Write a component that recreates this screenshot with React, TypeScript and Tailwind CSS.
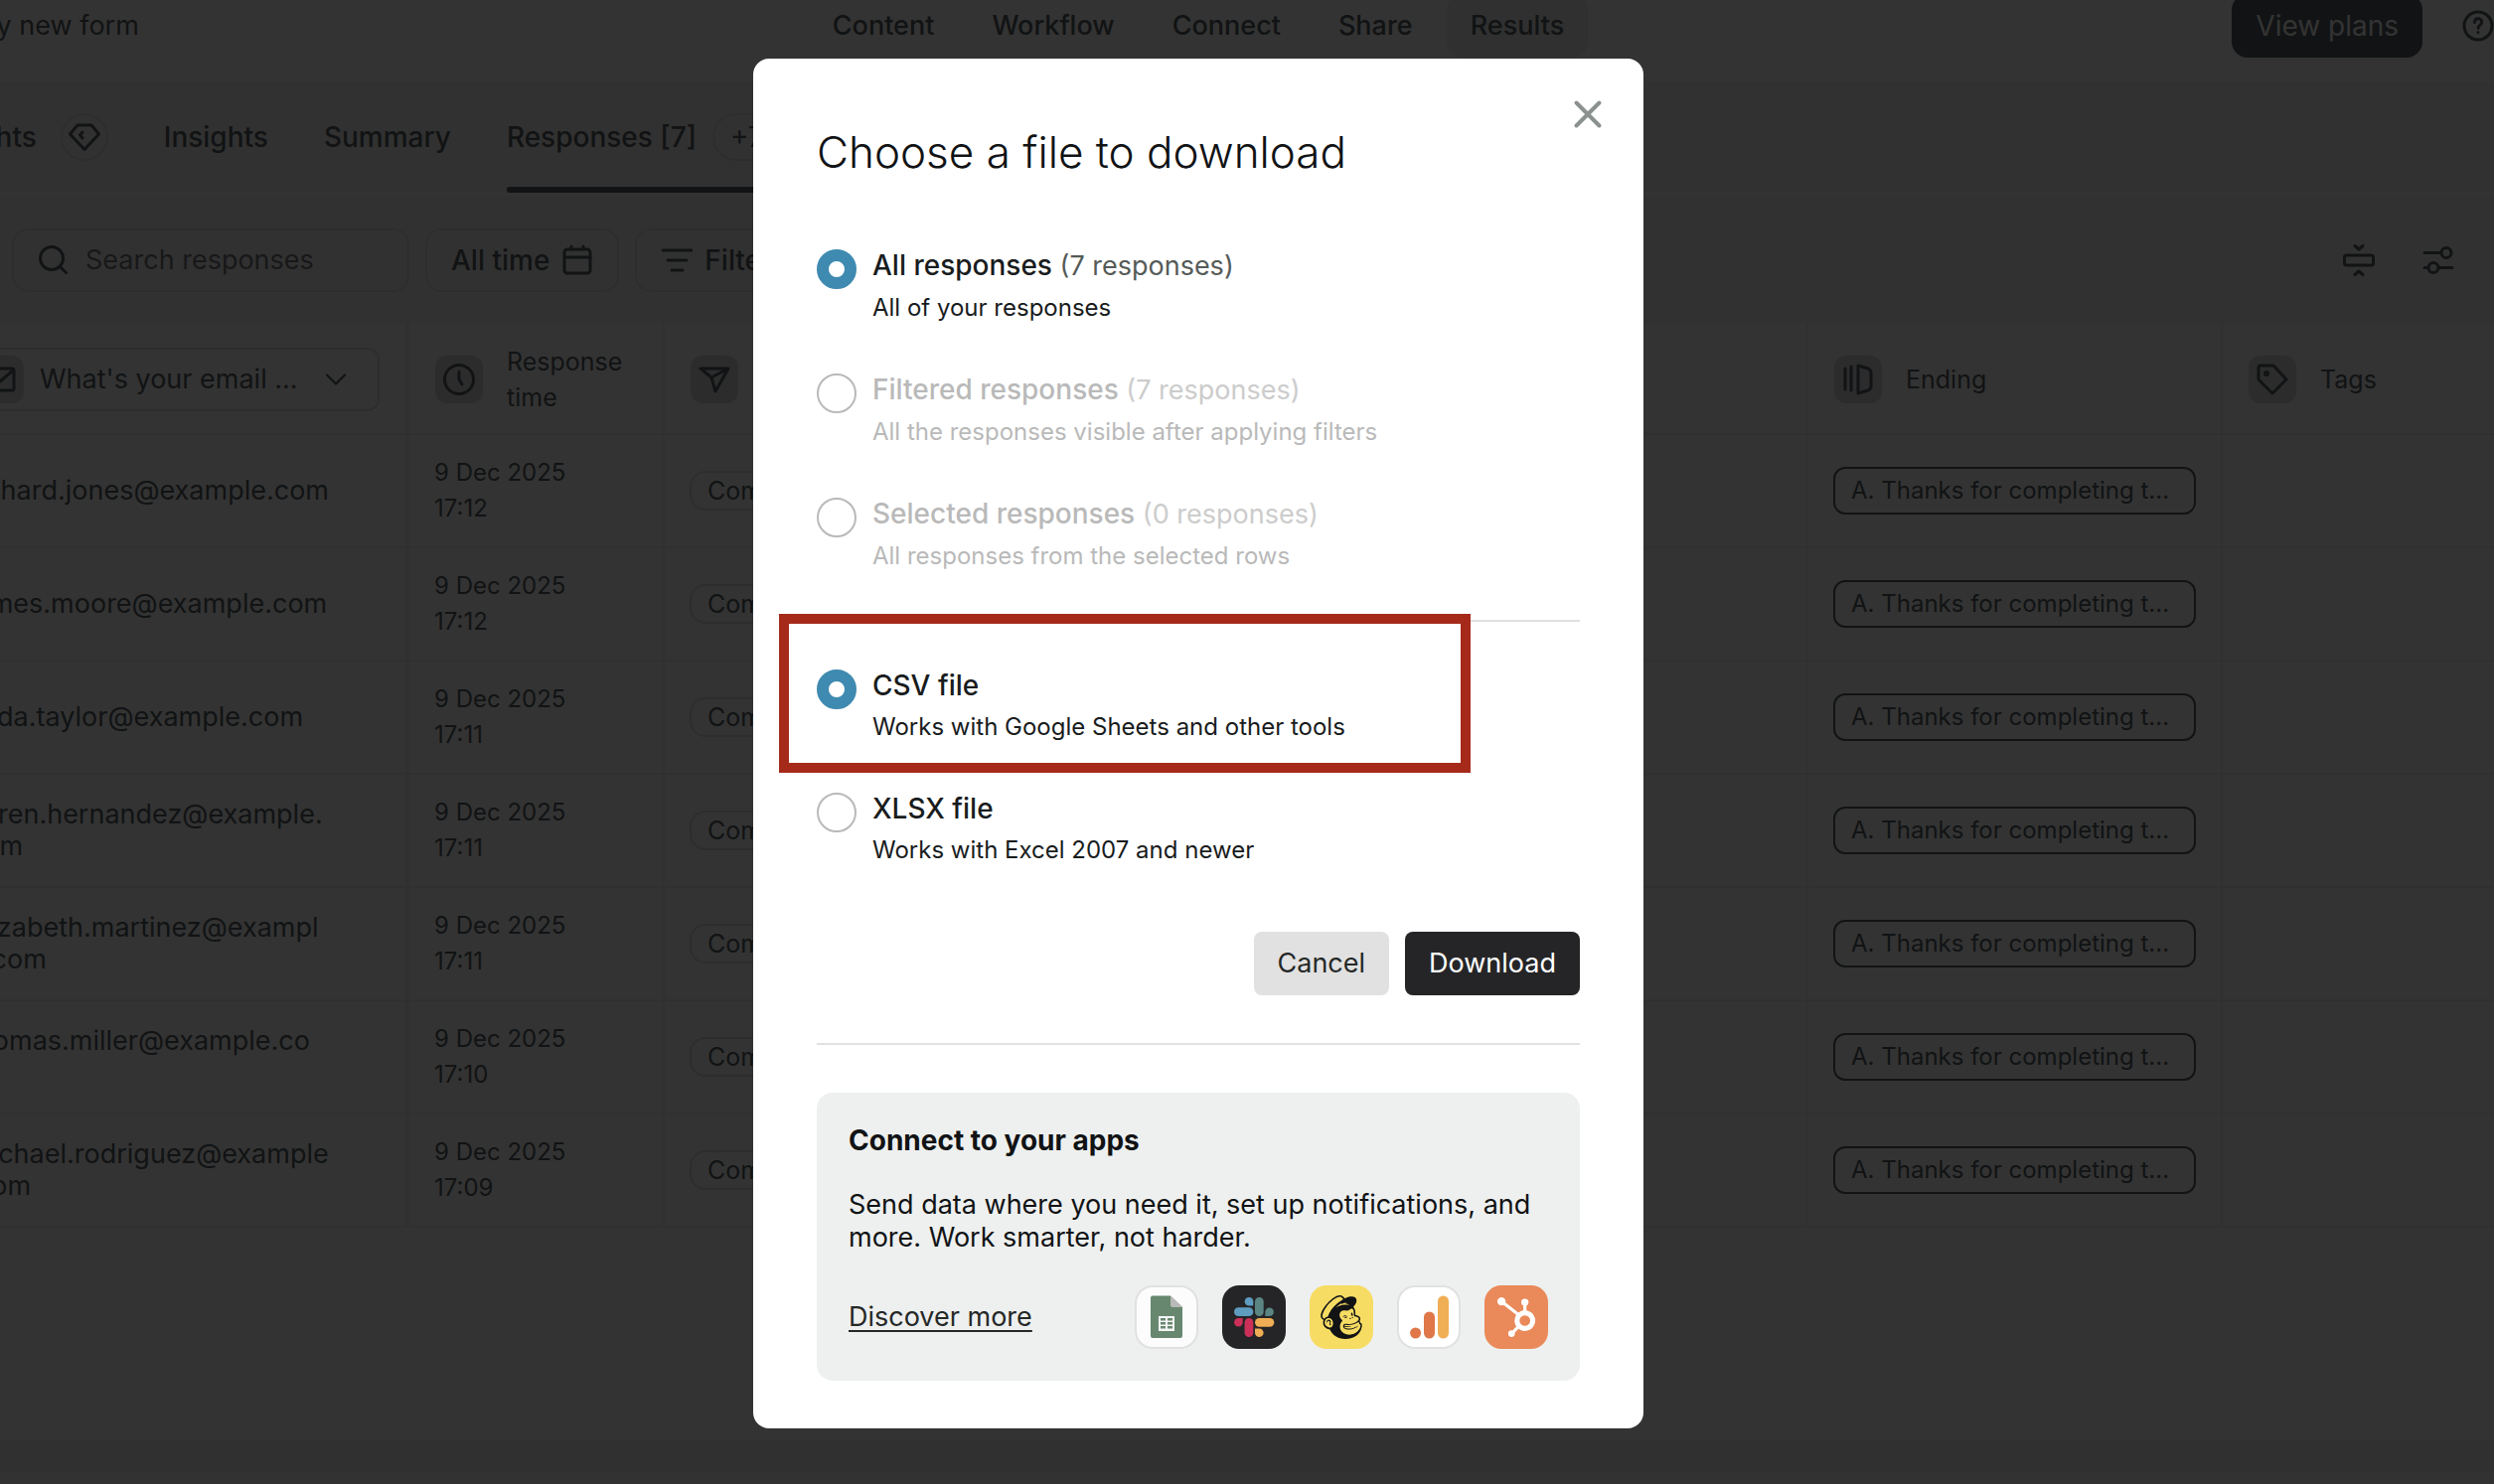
import { useState, type ReactNode } from 'react';
import { SiHubspot, SiMailchimp } from 'react-icons/si';

interface ResponseRow {
    email: string;
    date: string;
    time: string;
}

interface OptionProps {
    name: string;
    value: string;
    title: string;
    count?: string;
    hint: string;
    selected: string;
    disabled?: boolean;
    onSelect: (value: string) => void;
}

const rows: ResponseRow[] = [
    { email: 'richard.jones@example.com', date: '9 Dec 2025', time: '17:12' },
    { email: 'james.moore@example.com', date: '9 Dec 2025', time: '17:12' },
    { email: 'linda.taylor@example.com', date: '9 Dec 2025', time: '17:11' },
    { email: 'karen.hernandez@example.com', date: '9 Dec 2025', time: '17:11' },
    { email: 'elizabeth.martinez@example.com', date: '9 Dec 2025', time: '17:11' },
    { email: 'thomas.miller@example.com', date: '9 Dec 2025', time: '17:10' },
    { email: 'michael.rodriguez@example.com', date: '9 Dec 2025', time: '17:09' },
];

const navItems = ['Content', 'Workflow', 'Connect', 'Share', 'Results'];

function Icon({ children, className = 'size-8' }: { children: ReactNode; className?: string }) {
    return (
        <svg
            viewBox="0 0 32 32"
            className={`shrink-0 ${className}`}
            fill="none"
            stroke="currentColor"
            strokeWidth="3"
            strokeLinecap="round"
            strokeLinejoin="round"
            aria-hidden="true"
        >
            {children}
        </svg>
    );
}

function IconBox({ children }: { children: ReactNode }) {
    return (
        <span className="flex size-12 shrink-0 items-center justify-center rounded-xl bg-[#dcdcdc]">
            <Icon>{children}</Icon>
        </span>
    );
}

function Header() {
    return (
        <header className="grid h-28 shrink-0 grid-cols-[1fr_auto_1fr] items-center bg-white">
            <span className="pl-[70px]">My new form</span>
            <nav className="flex gap-2.5 font-medium">
                {navItems.map((item) => (
                    <a
                        key={item}
                        href="#"
                        className={`flex h-16 items-center rounded-2xl px-6 ${item === 'Results' ? 'bg-[#f0f0f0]' : ''}`}
                    >
                        {item}
                    </a>
                ))}
            </nav>
            <div className="flex items-center justify-end gap-10">
                <button className="h-16 rounded-2xl bg-[#555f64] px-6 text-[28px] text-white">View plans</button>
                <button aria-label="Help">
                    <Icon>
                        <circle cx="16" cy="16" r="14" />
                        <path d="M12.5 12.5c0-4.800 7.200-4.800 7.200-.3 0 2.700-3.600 3-3.600 6M16 22.600v.2" />
                    </Icon>
                </button>
            </div>
        </header>
    );
}

function Tabs() {
    return (
        <nav className="flex h-[116px] shrink-0 gap-14 border-b-4 border-white bg-[#f5f5f5] text-[28px] font-medium">
            <a href="#" className="flex items-center gap-6">
                Highlights
                <span className="flex size-12 items-center justify-center rounded-full border-2 border-[#e2e2e2]">
                    <Icon>
                        <path d="M9 4h14l7.500 9L16 28.500 1.500 13z" />
                        <path d="m14 11-2.500 3 2.500 3" />
                    </Icon>
                </span>
            </a>
            <a href="#" className="flex items-center">Insights</a>
            <a href="#" className="flex items-center">Summary</a>
            <a href="#" className="relative flex items-center gap-4">
                Responses [7]
                <span className="flex h-12 items-center rounded-full border-2 border-[#e2e2e2] px-4 font-normal">+7</span>
                <span className="absolute inset-x-0 bottom-0 h-1.5 rounded-full bg-[#555f64]" />
            </a>
        </nav>
    );
}

function Toolbar() {
    return (
        <div className="flex h-32 shrink-0 items-center gap-4 bg-[#f5f5f5] pr-10 pl-[110px]">
            <label className="flex h-16 w-[400px] items-center gap-4 rounded-2xl border-2 border-[#e2e2e2] px-6">
                <Icon>
                    <circle cx="14" cy="14" r="11.500" />
                    <path d="m22.500 22.500 6 6" />
                </Icon>
                <input
                    aria-label="Search responses"
                    placeholder="Search responses"
                    className="w-full min-w-0 bg-transparent outline-none placeholder:text-[#78787d]"
                />
            </label>
            <button className="flex h-16 items-center gap-3 rounded-2xl border-2 border-[#e2e2e2] px-6 text-[28px] font-medium">
                All time
                <Icon>
                    <rect x="3" y="5" width="26" height="24" rx="3" />
                    <path d="M3 13h26M10 2v3M22 2v3" />
                </Icon>
            </button>
            <button className="flex h-16 items-center gap-3 rounded-2xl border-2 border-[#e2e2e2] px-6 text-[28px] font-medium">
                <Icon>
                    <path d="M2 6h29M7 16h19M11 26h11" />
                </Icon>
                Filters
            </button>
            <div className="ml-auto flex items-center gap-12">
                <button aria-label="Row height">
                    <Icon>
                        <rect x="1.500" y="11" width="29" height="10" rx="2" />
                        <path d="m12 1.500 4 3.500 4-3.500M12 30.500l4-3.500 4 3.500" />
                    </Icon>
                </button>
                <button aria-label="Table settings">
                    <Icon>
                        <circle cx="24" cy="8.500" r="5" />
                        <circle cx="11" cy="23.500" r="5" />
                        <path d="M2 8.500h17M2 23.500h4M16 23.500h14" />
                    </Icon>
                </button>
            </div>
        </div>
    );
}

function ResponsesTable() {
    return (
        <table className="w-full table-fixed border-separate border-spacing-0 text-left [&_td]:border-b-2 [&_td]:border-[#eeeeee] [&_th]:border-b-2 [&_th]:border-[#eeeeee] [&_th]:pt-0.5 [&_th]:font-normal">
            <colgroup>
                <col className="w-[510px]" />
                <col className="w-[257px]" />
                <col />
                <col className="w-[417px]" />
                <col className="w-[273px]" />
            </colgroup>
            <thead>
                <tr className="h-[112px]">
                    <th className="border-r-4 pr-[26px] pl-[66px]">
                        <button className="flex h-16 w-full items-center gap-4 rounded-xl border-2 border-[#e2e2e2] px-1.5">
                            <IconBox>
                                <rect x="2" y="5" width="28" height="22" rx="2" />
                                <path d="m3 7 13 11L29 7" />
                            </IconBox>
                            What's your email ...
                            <Icon className="mr-6 ml-auto size-6">
                                <path d="m4 10 12 12 12-12" />
                            </Icon>
                        </button>
                    </th>
                    <th className="border-r-2 px-[26px]">
                        <div className="flex items-center gap-6 text-[25px] leading-9">
                            <IconBox>
                                <circle cx="16" cy="16" r="14.500" />
                                <path d="M16 8v8l3 5" />
                            </IconBox>
                            Response time
                        </div>
                    </th>
                    <th className="border-r-2 px-[26px]">
                        <div className="flex items-center gap-6 text-[25px]">
                            <IconBox>
                                <path d="M2 5h28L17 28l-4-14zM13 14 29 5.500" />
                            </IconBox>
                            Response type
                        </div>
                    </th>
                    <th className="border-r-2 px-[26px]">
                        <div className="flex items-center gap-6 text-[25px]">
                            <IconBox>
                                <path d="M3 5v21M9 3v24M16 2l10 3c2 1 3 2 3 4v14c0 2-1 3-3 4l-10 3z" />
                            </IconBox>
                            Ending
                        </div>
                    </th>
                    <th className="px-[26px]">
                        <div className="flex items-center gap-6 text-[25px]">
                            <IconBox>
                                <path d="M2 4c0-1 1-2 2-2h13l13 14-14 14L2 16z" />
                                <circle cx="10" cy="10" r="1.500" fill="currentColor" />
                            </IconBox>
                            Tags
                        </div>
                    </th>
                </tr>
            </thead>
            <tbody>
                {rows.map((row) => (
                    <tr key={row.email} className="h-[114px]">
                        <td className="border-r-4 pl-[66px]">
                            <div className="w-[365px] wrap-anywhere">{row.email}</div>
                        </td>
                        <td className="border-r-2 px-[25px] text-[24px] leading-9">
                            {row.date}
                            <br />
                            {row.time}
                        </td>
                        <td className="border-r-2 px-[25px]">
                            <span className="inline-flex h-10 items-center rounded-2xl border-2 border-[#e2e2e2] px-4 text-[25px]">Completed</span>
                        </td>
                        <td className="border-r-2 px-[25px]">
                            <span className="flex h-12 items-center rounded-xl border-2 border-[#555f64] px-4 text-[24px]">
                                A. Thanks for completing t...
                            </span>
                        </td>
                        <td />
                    </tr>
                ))}
            </tbody>
        </table>
    );
}

function Option({ name, value, title, count, hint, selected, disabled, onSelect }: OptionProps) {
    const id = `${name}-${value}`;

    return (
        <div className={`flex gap-4 ${disabled ? 'text-[#b9b9b9]' : 'text-[#191c1d]'}`}>
            <input
                type="radio"
                id={id}
                name={name}
                checked={selected === value}
                disabled={disabled}
                onChange={() => onSelect(value)}
                className="size-10 shrink-0 appearance-none rounded-full border-2 border-[#b9b9b9] bg-white checked:border-12 checked:border-[#3f8ab0]"
            />
            <label htmlFor={id} className="flex flex-col gap-3">
                <span className="text-[28px] font-medium">
                    {title}
                    {count && (
                        <span className={`text-[27px] font-normal ${disabled ? 'text-[#cccccc]' : 'text-[#555b58]'}`}> ({count})</span>
                    )}
                </span>
                <span className="text-[24px] leading-7">{hint}</span>
            </label>
        </div>
    );
}

function SheetsLogo() {
    return (
        <svg viewBox="0 0 64 64" className="size-16" aria-hidden="true">
            <rect x="1" y="1" width="62" height="62" rx="17" fill="#fcfcfc" stroke="#e1e1e1" strokeWidth="2" />
            <path d="M18 10.500h18l12 11.500v29a2 2 0 0 1-2 2H18a2 2 0 0 1-2-2V12.500a2 2 0 0 1 2-2z" fill="#67886f" />
            <path d="M36 10.500 48 22H38a2 2 0 0 1-2-2z" fill="#b9b9b9" />
            <rect x="24" y="31" width="16" height="15" fill="#f5f5f5" />
            <path d="M26 33h5v2.500h-5zM33 33h5v2.500h-5zM26 37h5v2.500h-5zM33 37h5v2.500h-5zM26 41h5v2.500h-5zM33 41h5v2.500h-5z" fill="#67886f" />
        </svg>
    );
}

function SlackLogo() {
    return (
        <svg viewBox="0 0 64 64" className="size-16" aria-hidden="true">
            <rect width="64" height="64" rx="17" fill="#252527" />
            <g fill="#5e9cc0">
                <path d="M31.300 20.600H27a4.300 4.300 0 1 1 4.300-4.300z" />
                <rect x="12" y="22.300" width="19.300" height="8.700" rx="4.350" />
            </g>
            <g fill="#5a8583">
                <rect x="33" y="12" width="8.700" height="19" rx="4.350" />
                <path d="M43.300 31v-4.300a4.300 4.300 0 1 1 4.300 4.300z" />
            </g>
            <g fill="#cc3059">
                <path d="M20.700 33v4.300a4.300 4.300 0 1 1-4.300-4.300z" />
                <rect x="22.600" y="33" width="8.700" height="19" rx="4.350" />
            </g>
            <g fill="#efae55">
                <rect x="33" y="33" width="19.300" height="8.700" rx="4.350" />
                <path d="M33 43.400h4.300a4.300 4.300 0 1 1-4.300 4.300z" />
            </g>
        </svg>
    );
}

function AnalyticsLogo() {
    return (
        <svg viewBox="0 0 64 64" className="size-16" aria-hidden="true">
            <rect x="1" y="1" width="62" height="62" rx="17" fill="#ffffff" stroke="#e1e1e1" strokeWidth="2" />
            <circle cx="18.600" cy="48" r="5.500" fill="#df7748" />
            <rect x="27" y="26.500" width="11" height="27" rx="5.500" fill="#df7748" />
            <rect x="41" y="10.500" width="11" height="43" rx="5.500" fill="#f0ae55" />
        </svg>
    );
}

function ConnectPanel() {
    return (
        <section className="mt-12 flex flex-col gap-8 rounded-2xl bg-[#eef0ef] p-8">
            <h2 className="text-[28px] font-bold">Connect to your apps</h2>
            <p className="leading-[33px]">Send data where you need it, set up notifications, and more. Work smarter, not harder.</p>
            <div className="flex items-center justify-between">
                <a href="#" className="text-[#252827] underline decoration-2 underline-offset-4">Discover more</a>
                <div className="flex gap-6">
                    <SheetsLogo />
                    <SlackLogo />
                    <span className="flex size-16 items-center justify-center rounded-[17px] bg-[#f7dc63] text-[#111315]">
                        <SiMailchimp className="size-11" />
                    </span>
                    <AnalyticsLogo />
                    <span className="flex size-16 items-center justify-center rounded-[17px] bg-[#ea8959] text-white">
                        <SiHubspot className="size-10" />
                    </span>
                </div>
            </div>
        </section>
    );
}

function DownloadDialog() {
    const [scope, setScope] = useState('all');
    const [format, setFormat] = useState('csv');

    return (
        <div role="dialog" aria-modal="true" aria-labelledby="download-title" className="relative w-[896px] rounded-2xl bg-white px-16 pb-12 text-[#111315]">
            <button aria-label="Close" className="absolute top-9 right-9 flex size-10 items-center justify-center text-[#8b918e]">
                <Icon className="size-8">
                    <path strokeWidth="4" d="m4.500 4.500 23 23m0-23-23 23" />
                </Icon>
            </button>
            <h1 id="download-title" className="pt-16 text-[44px] leading-[60px] font-light">Choose a file to download</h1>
            <fieldset className="mt-[68px] flex flex-col gap-[52px]">
                <Option name="scope" value="all" title="All responses" count="7 responses" hint="All of your responses" selected={scope} onSelect={setScope} />
                <Option name="scope" value="filtered" title="Filtered responses" count="7 responses" hint="All the responses visible after applying filters" selected={scope} onSelect={setScope} disabled />
                <Option name="scope" value="selected" title="Selected responses" count="0 responses" hint="All responses from the selected rows" selected={scope} onSelect={setScope} disabled />
            </fieldset>
            <hr className="mt-[50px] border-t-2 border-[#e1e1e1]" />
            <fieldset className="mt-12 flex flex-col gap-[52px]">
                <div className="relative">
                    <Option name="format" value="csv" title="CSV file" hint="Works with Google Sheets and other tools" selected={format} onSelect={setFormat} />
                    <div className="pointer-events-none absolute -top-14 -left-[38px] h-40 w-[696px] border-10 border-[#a52a1a]" />
                </div>
                <Option name="format" value="xlsx" title="XLSX file" hint="Works with Excel 2007 and newer" selected={format} onSelect={setFormat} />
            </fieldset>
            <div className="mt-[68px] flex justify-end gap-4">
                <button className="h-16 rounded-lg bg-[#e1e1e1] px-6 text-[#252827]">Cancel</button>
                <button className="h-16 rounded-lg bg-[#252527] px-6 text-white">Download</button>
            </div>
            <hr className="mt-12 border-t-2 border-[#e1e1e1]" />
            <ConnectPanel />
        </div>
    );
}

export default function App() {
    return (
        <div className="h-screen overflow-hidden bg-white">
            {/* the page sits scrolled a little to the right and down */}
            <div className="relative -mt-[30px] -ml-[98px] flex h-[calc(100vh+30px)] flex-col font-['Inter',sans-serif] text-[27px] leading-8 text-[#555f64]">
                <Header />
                <Tabs />
                <Toolbar />
                <main className="flex-1 bg-white">
                    <ResponsesTable />
                </main>
                <footer className="h-11 shrink-0 border-b-12 border-[#f8f8f8] bg-[#f0f0f0]" />
                <div className="absolute inset-0 flex items-start justify-center bg-black/80 pt-[89px]">
                    <DownloadDialog />
                </div>
            </div>
        </div>
    );
}
